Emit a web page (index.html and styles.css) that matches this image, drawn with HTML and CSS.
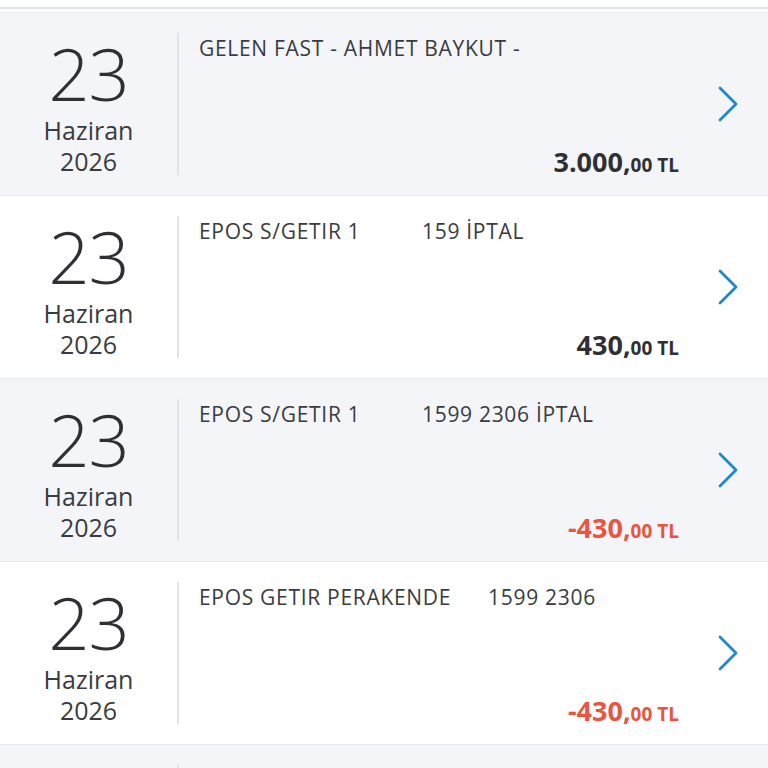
FILE: index.html
```html
<!DOCTYPE html>
<html lang="tr">
<head>
    <meta charset="UTF-8">
    <meta name="viewport" content="width=device-width, initial-scale=1.0">
    <title>Hesap Hareketleri</title>
    <link rel="stylesheet" href="styles.css">
</head>
<body>
    <div class="topbar"></div>

    <div class="list">
        <div class="row alt">
            <div class="date">
                <span class="day">23</span>
                <span class="month">Haziran</span>
                <span class="year">2026</span>
            </div>
            <div class="info">
                <p class="desc">GELEN FAST - AHMET BAYKUT -</p>
                <p class="amount">3.000,<small>00 TL</small></p>
            </div>
            <div class="go">
                <svg width="22" height="36" viewBox="0 0 22 36"><path d="M3 2 L19 18 L3 34" fill="none" stroke="#1d88ca" stroke-width="2.8" stroke-linecap="round" stroke-linejoin="round"/></svg>
            </div>
        </div>

        <div class="row">
            <div class="date">
                <span class="day">23</span>
                <span class="month">Haziran</span>
                <span class="year">2026</span>
            </div>
            <div class="info">
                <p class="desc">EPOS S/GETIR 1          159 İPTAL</p>
                <p class="amount">430,<small>00 TL</small></p>
            </div>
            <div class="go">
                <svg width="22" height="36" viewBox="0 0 22 36"><path d="M3 2 L19 18 L3 34" fill="none" stroke="#1d88ca" stroke-width="2.8" stroke-linecap="round" stroke-linejoin="round"/></svg>
            </div>
        </div>

        <div class="row alt">
            <div class="date">
                <span class="day">23</span>
                <span class="month">Haziran</span>
                <span class="year">2026</span>
            </div>
            <div class="info">
                <p class="desc">EPOS S/GETIR 1          1599 2306 İPTAL</p>
                <p class="amount minus">-430,<small>00 TL</small></p>
            </div>
            <div class="go">
                <svg width="22" height="36" viewBox="0 0 22 36"><path d="M3 2 L19 18 L3 34" fill="none" stroke="#1d88ca" stroke-width="2.8" stroke-linecap="round" stroke-linejoin="round"/></svg>
            </div>
        </div>

        <div class="row">
            <div class="date">
                <span class="day">23</span>
                <span class="month">Haziran</span>
                <span class="year">2026</span>
            </div>
            <div class="info">
                <p class="desc">EPOS GETIR PERAKENDE      1599 2306</p>
                <p class="amount minus">-430,<small>00 TL</small></p>
            </div>
            <div class="go">
                <svg width="22" height="36" viewBox="0 0 22 36"><path d="M3 2 L19 18 L3 34" fill="none" stroke="#1d88ca" stroke-width="2.8" stroke-linecap="round" stroke-linejoin="round"/></svg>
            </div>
        </div>

        <div class="row alt">
            <div class="date">
                <span class="day">22</span>
                <span class="month">Haziran</span>
                <span class="year">2026</span>
            </div>
            <div class="info">
                <p class="desc">EPOS S/GETİR 1          1599 İPTAL</p>
                <p class="amount">430,<small>00 TL</small></p>
            </div>
            <div class="go">
                <svg width="22" height="36" viewBox="0 0 22 36"><path d="M3 2 L19 18 L3 34" fill="none" stroke="#1d88ca" stroke-width="2.8" stroke-linecap="round" stroke-linejoin="round"/></svg>
            </div>
        </div>
    </div>
</body>
</html>
```

FILE: styles.css
```css
body {
    font-family: "Open Sans", "Noto Sans", sans-serif;
    margin: 0;
    height: 768px;
    overflow: hidden;
    background: #fff;
    color: #2f3034;
}

.topbar {
    height: 7px;
    border-bottom: 2px solid #e3e4e8;
    margin-bottom: 3px;
}

.list {
    border-top: 1px solid #eceef2;
}

.row {
    display: flex;
    height: 182px;
    border-bottom: 1px solid #e8e9ee;
    background: #fff;
}
.row.alt {
    background: #f4f5f9;
}

.date {
    width: 179px;
    margin: 20px 0;
    padding-top: 10px;
    box-sizing: border-box;
    border-right: 2px solid #e1e2ea;
    display: flex;
    flex-direction: column;
    align-items: center;
}
.day {
    font-size: 72px;
    line-height: 60px;
    font-weight: 300;
    letter-spacing: -1px;
}
.month {
    font-size: 25px;
    line-height: 28px;
    margin-top: 13px;
    color: #3a3b40;
}
.year {
    font-size: 25px;
    line-height: 28px;
    margin-top: 3px;
    color: #3a3b40;
}

.info {
    flex: 1;
    display: flex;
    flex-direction: column;
    justify-content: space-between;
    padding: 21px 0 15px 20px;
}
.desc {
    margin: 0;
    font-size: 21px;
    white-space: pre;
    color: #3a3b40;
    letter-spacing: 0.7px;
}
.amount {
    margin: 0;
    text-align: right;
    font-size: 27px;
    line-height: 30px;
    font-weight: 700;
    color: #2f3034;
}
.amount small {
    font-size: 19px;
}
.amount.minus {
    color: #e9553f;
}

.go {
    width: 89px;
    display: flex;
    align-items: center;
    justify-content: center;
    padding-left: 8px;
    box-sizing: border-box;
}
```
